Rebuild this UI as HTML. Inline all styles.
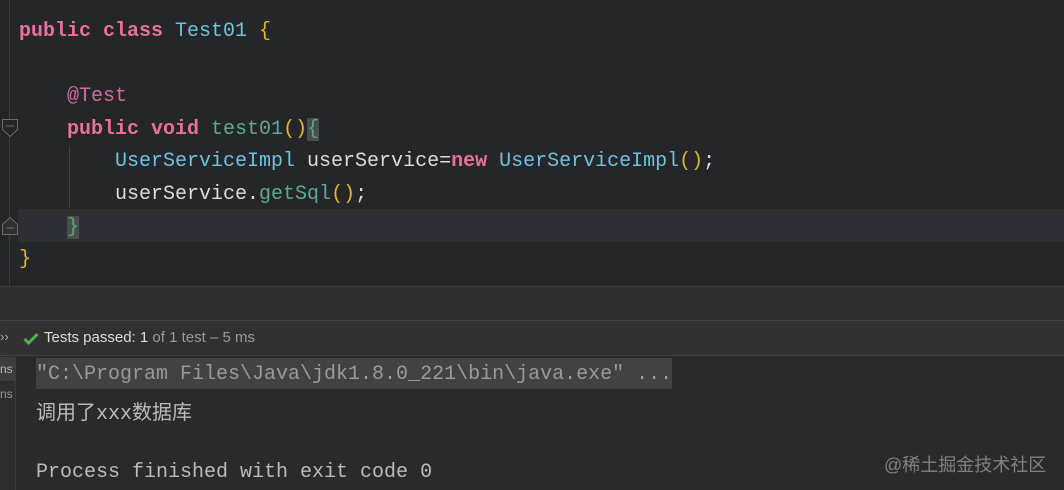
<!DOCTYPE html>
<html><head><meta charset="utf-8"><style>
*{margin:0;padding:0;box-sizing:border-box}
body{width:1064px;height:490px;overflow:hidden;background:#2b2b2b;position:relative;font-family:"Liberation Mono","Noto Sans CJK SC",monospace}
#ed{position:absolute;left:0;top:0;width:1064px;height:286px;background:#25262a}
.gl{position:absolute;left:9px;top:0;width:1px;height:286px;background:#3a3b3f}
.cur{position:absolute;left:18px;top:209px;width:1046px;height:33px;background:#2d2f34}
.ln{position:absolute;left:19px;font-size:20px;line-height:32px;white-space:pre;color:#dcdcdc}
.k{color:#e86fa0;font-weight:bold}.c{color:#6fc3df}.a{color:#d16d9e}.m{color:#5ea995}.y{color:#e0b630}.g{color:#59a869}
.hb{background:#4a4c50}
#strip{position:absolute;left:0;top:286px;width:1064px;height:34px;background:#2f3033;border-top:1px solid #3a3b3e}
#hdr{position:absolute;left:0;top:320px;width:1064px;height:36px;background:#313133;border-top:1px solid #404144;border-bottom:1px solid #404144;font-family:"Liberation Sans",sans-serif;font-size:15px;color:#dcdcdc}
#con{position:absolute;left:0;top:356px;width:1064px;height:134px;background:#2a2a2a}
.tool{position:absolute;left:0;top:356px;width:16px;height:134px;background:#2e2e2e;border-right:1px solid #3a3a3a}
.cl{position:absolute;left:36px;font-size:20px;white-space:pre;color:#bbbbbb}
</style></head><body>
<div id="ed">
<div class="gl"></div>
<div class="cur"></div>
<svg style="position:absolute;left:1px;top:118px" width="18" height="22"><path d="M1.5 1.5h15v10l-7.5 7-7.5-7z" fill="#25262a" stroke="#6a6b6e"/><path d="M5 8h8" stroke="#6a6b6e"/></svg>
<svg style="position:absolute;left:1px;top:214px" width="18" height="22"><path d="M1.5 20.5h15v-10l-7.5-7-7.5 7z" fill="#2d2f34" stroke="#6a6b6e"/><path d="M5 14h8" stroke="#6a6b6e"/></svg>
<div style="position:absolute;left:69px;top:146px;width:1px;height:62px;background:#3f4044"></div>
<div class="ln" style="top:16px"><span class="k">public class </span><span class="c">Test01 </span><span class="y">{</span></div>
<div class="ln" style="top:81px">    <span class="a">@Test</span></div>
<div class="ln" style="top:114px">    <span class="k">public void </span><span class="m">test01</span><span class="y">()</span><span class="g hb">{</span></div>
<div class="ln" style="top:146px">        <span class="c">UserServiceImpl </span>userService=<span class="k">new </span><span class="c">UserServiceImpl</span><span class="y">()</span>;</div>
<div class="ln" style="top:179px">        userService.<span class="m">getSql</span><span class="y">()</span>;</div>
<div class="ln" style="top:212px">    <span class="g hb">}</span></div>
<div class="ln" style="top:244px"><span class="y">}</span></div>
</div>
<div id="strip"></div>
<div id="hdr">
<span style="position:absolute;left:0;top:8px;font-size:13px;color:#aaa">››</span>
<svg style="position:absolute;left:23px;top:11px" width="16" height="13"><path d="M1.5 7l4 4 9-9" stroke="#4fb150" stroke-width="3" fill="none"/></svg>
<span style="position:absolute;left:44px;top:8px">Tests passed: 1 <span style="color:#9a9a9a">of 1 test – 5 ms</span></span>
</div>
<div id="con"></div>
<div class="tool"></div>
<div style="position:absolute;left:0;top:357px;width:16px;height:24px;background:#3c3d40"></div>
<span style="position:absolute;left:0;top:362px;font-family:'Liberation Sans',sans-serif;font-size:12px;color:#bbb">ns</span>
<span style="position:absolute;left:0;top:387px;font-family:'Liberation Sans',sans-serif;font-size:12px;color:#999">ns</span>
<div style="position:absolute;left:36px;top:358px;width:636px;height:31px;background:#414245"></div>
<div class="cl" style="top:363px;color:#9a9a9a">"C:\Program Files\Java\jdk1.8.0_221\bin\java.exe" ...</div>
<div class="cl" style="top:396px;font-family:'Liberation Mono','Noto Sans CJK SC',monospace">调用了xxx数据库</div>
<div class="cl" style="top:461px">Process finished with exit code 0</div>
<div style="position:absolute;left:884px;top:451px;font-family:'Liberation Sans','Noto Sans CJK SC',sans-serif;font-size:18px;color:rgba(200,200,200,0.55)">@稀土掘金技术社区</div>
</body></html>
